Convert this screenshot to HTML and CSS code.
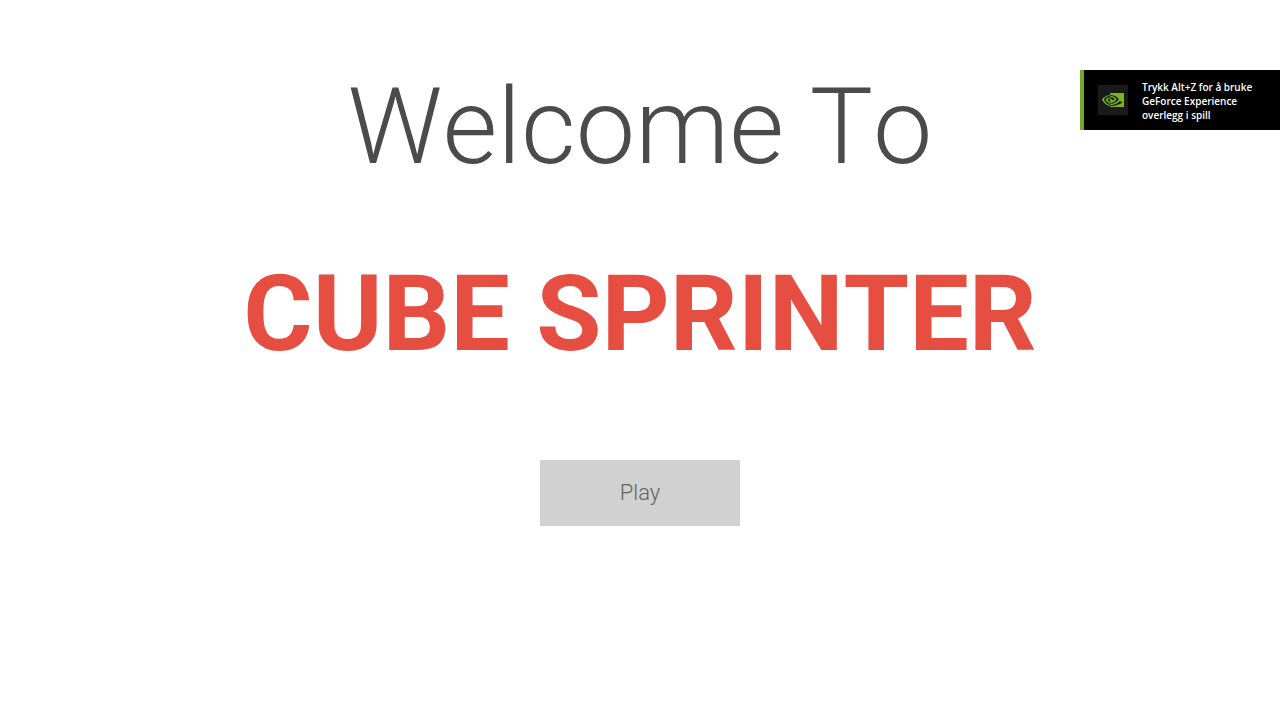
FILE: index.html
```html
<!DOCTYPE html>
<html lang="en">
<head>
<meta charset="utf-8">
<title>Cube Sprinter</title>
<link rel="stylesheet" href="styles.css">
</head>
<body>
<main class="menu">
  <h1 class="heading">
    <span class="welcome">Welcome To</span>
    <span class="name">CUBE SPRINTER</span>
  </h1>
  <button class="play" type="button">Play</button>
</main>
<aside class="toast" lang="no">
  <span class="badge">
    <svg class="logo" viewBox="0 0 24 16" aria-hidden="true">
      <path fill="#7ab51d" fill-rule="evenodd" d="M8.900 4.800V3.300l.5 0c4-.1 6.600 3.400 6.600 3.400s-2.800 3.900-5.900 3.900c-.4 0-.8-.1-1.200-.2V5.900c1.600.2 1.900.9 2.800 2.400l2.100-1.700S12.300 4.700 9.800 4.700l-.9.1M8.900 0v2.200l.5 0C14.900 2 18.500 6.700 18.500 6.700s-4.100 5-8.400 5c-.4 0-.8 0-1.200-.1V13l1 .1c4 0 6.900-2 9.700-4.500.5.400 2.400 1.300 2.700 1.700-2.700 2.200-8.900 4-12.400 4l-1-.1V16H24V0H8.900M8.900 10.400v1.200C5.100 10.900 4 6.900 4 6.900s1.900-2 4.900-2.300v1.300C7.300 5.700 6.100 7.200 6.100 7.200s.7 2.500 2.800 3.200M2.100 6.700s2.300-3.300 6.800-3.700V2.200C3.900 2.600 0 6.700 0 6.700s2.200 6.500 8.900 7.200V13C4 12.300 2.100 6.700 2.100 6.700z"/>
    </svg>
  </span>
  <p class="message">Trykk Alt+Z for å bruke<br>GeForce Experience<br>overlegg i spill</p>
</aside>
</body>
</html>
```
FILE: styles.css
```css
body {
  margin: 0;
  background: #fff;
  font-family: Roboto, "Liberation Sans", sans-serif;
}

.menu {
  display: flex;
  flex-direction: column;
  align-items: center;
  padding-top: 64px;
}

.heading {
  margin: 0;
  font-size: 106px;
  font-kerning: none;
  line-height: 126px;
  text-align: center;
}

.welcome,
.name {
  display: block;
}

.welcome {
  color: #4b4b4b;
  font-weight: 300;
}

.name {
  margin-top: 61px;
  color: #e64e42;
  font-weight: 700;
}

.play {
  width: 200px;
  height: 66px;
  margin-top: 83px;
  padding: 0;
  border: 0;
  background: #d1d1d1;
  color: #636363;
  font: 300 22px/26px Roboto, "Liberation Sans", sans-serif;
}

.toast {
  position: absolute;
  top: 70px;
  right: 0;
  display: flex;
  align-items: center;
  box-sizing: border-box;
  width: 200px;
  height: 60px;
  padding-left: 14px;
  border-left: 4px solid #72a728;
  background: #000;
}

.badge {
  display: flex;
  align-items: center;
  justify-content: center;
  width: 30px;
  height: 30px;
  background: #1a1a1a;
}

.logo {
  width: 22px;
}

.message {
  margin: 2px 0 0 14px;
  color: #fff;
  font: 600 10px/14px "Open Sans", "Noto Sans", sans-serif;
  white-space: nowrap;
}
```
